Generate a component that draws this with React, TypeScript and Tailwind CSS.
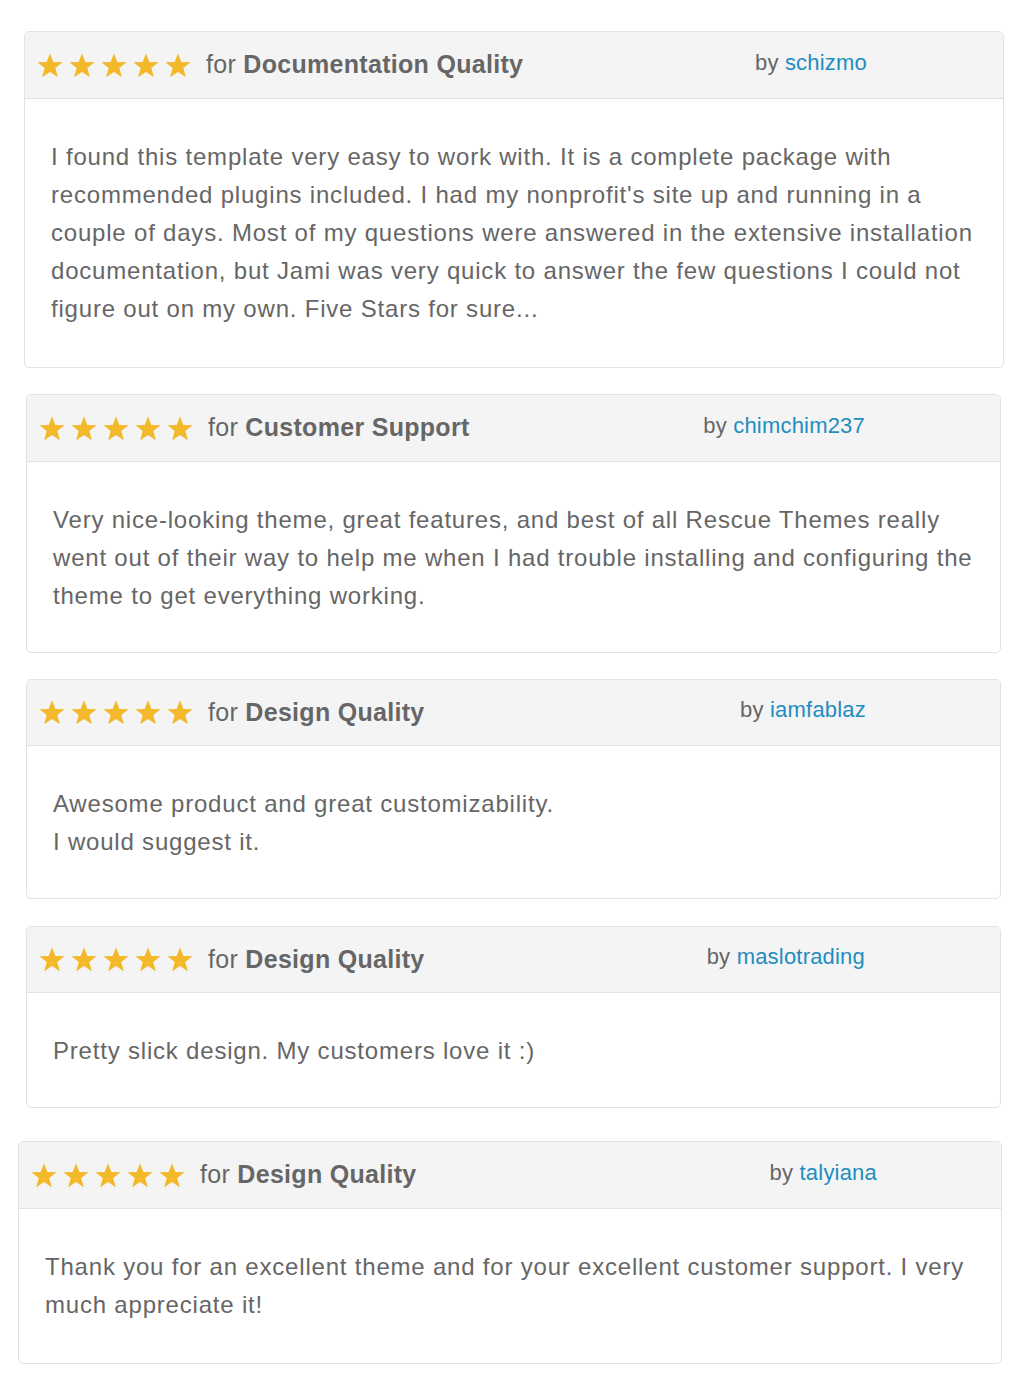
import React from "react";

type Review = {
  topic: string;
  author: string;
  body: React.ReactNode;
  box: string;
  byGap: string;
  head: string;
  pad: string;
};

const reviews: Review[] = [
  {
    topic: "Documentation Quality",
    author: "schizmo",
    box: "ml-[24px] w-[980px]",
    byGap: "mr-[136px]",
    head: "h-[67px]",
    pad: "pb-[39px]",
    body:
      "I found this template very easy to work with. It is a complete package with recommended plugins included. I had my nonprofit's site up and running in a couple of days. Most of my questions were answered in the extensive installation documentation, but Jami was very quick to answer the few questions I could not figure out on my own. Five Stars for sure...",
  },
  {
    topic: "Customer Support",
    author: "chimchim237",
    box: "ml-[26px] w-[975px]",
    byGap: "mr-[135px]",
    head: "h-[67px]",
    pad: "pb-[37px]",
    body:
      "Very nice-looking theme, great features, and best of all Rescue Themes really went out of their way to help me when I had trouble installing and configuring the theme to get everything working.",
  },
  {
    topic: "Design Quality",
    author: "iamfablaz",
    box: "ml-[26px] w-[975px]",
    byGap: "mr-[134px]",
    head: "h-[66px]",
    pad: "pb-[37px]",
    body: (
      <>
        Awesome product and great customizability.
        <br />I would suggest it.
      </>
    ),
  },
  {
    topic: "Design Quality",
    author: "maslotrading",
    box: "ml-[26px] w-[975px]",
    byGap: "mr-[135px]",
    head: "h-[66px]",
    pad: "pb-[37px]",
    body: "Pretty slick design. My customers love it :)",
  },
  {
    topic: "Design Quality",
    author: "talyiana",
    box: "ml-[18px] w-[984px]",
    byGap: "mr-[124px]",
    head: "h-[67px]",
    pad: "pb-[39px]",
    body:
      "Thank you for an excellent theme and for your excellent customer support. I very much appreciate it!",
  },
];

function Star() {
  return (
    <svg width="26" height="25" viewBox="0 0 24 23" aria-hidden>
      <polygon
        fill="#f4b82b"
        points="12,0.3 15.1,8.2 23.6,8.5 16.9,13.9 19.3,22.3 12,17.5 4.7,22.3 7.1,13.9 0.4,8.5 8.9,8.2"
      />
    </svg>
  );
}

function ReviewCard({ r }: { r: Review }) {
  return (
    <div
      className={`${r.box} overflow-hidden rounded-[5px] border border-[#dde3e9] bg-white`}
    >
      <div
        className={`${r.head} flex items-center justify-between border-b border-[#dde3e9] bg-[#f4f4f4] pl-[12px]`}
      >
        <div className="flex items-center">
          <div className="flex gap-[6px]">
            {[0, 1, 2, 3, 4].map((i) => (
              <Star key={i} />
            ))}
          </div>
          <span className="ml-[15px] text-[25px] tracking-[0.3px] text-[#666]">
            for <b className="font-bold">{r.topic}</b>
          </span>
        </div>
        <div className={`${r.byGap} -mt-[6px] text-[22px] tracking-[0.2px] text-[#666]`}>
          by <a className="text-[#1f8dbf]">{r.author}</a>
        </div>
      </div>
      <p
        className={`${r.pad} px-[26px] pt-[39px] text-[24px] leading-[38px] tracking-[0.8px] text-[#666]`}
      >
        {r.body}
      </p>
    </div>
  );
}

export default function App() {
  return (
    <div
      className="min-h-[1400px] bg-white pt-[31px]"
      style={{ fontFamily: '"Liberation Sans", Arial, sans-serif' }}
    >
      <ReviewCard r={reviews[0]} />
      <div className="mt-[26px]">
        <ReviewCard r={reviews[1]} />
      </div>
      <div className="mt-[26px]">
        <ReviewCard r={reviews[2]} />
      </div>
      <div className="mt-[27px]">
        <ReviewCard r={reviews[3]} />
      </div>
      <div className="mt-[33px]">
        <ReviewCard r={reviews[4]} />
      </div>
    </div>
  );
}
